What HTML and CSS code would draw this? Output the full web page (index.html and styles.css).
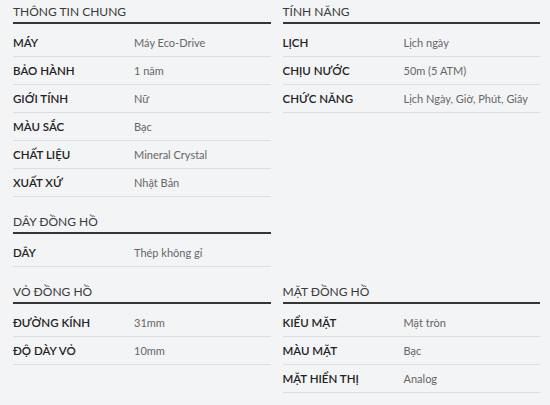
FILE: index.html
```html
<!DOCTYPE html>
<html lang="vi">
<head>
<meta charset="utf-8">
<link rel="stylesheet" href="styles.css">
</head>
<body>
<div class="specs">
  <section class="group">
    <h3 class="group-title">THÔNG TIN CHUNG</h3>
    <ul class="rows">
      <li class="row"><span class="label">MÁY</span><span class="value">Máy Eco-Drive</span></li>
      <li class="row"><span class="label">BẢO HÀNH</span><span class="value">1 năm</span></li>
      <li class="row"><span class="label">GIỚI TÍNH</span><span class="value">Nữ</span></li>
      <li class="row"><span class="label">MÀU SẮC</span><span class="value">Bạc</span></li>
      <li class="row"><span class="label">CHẤT LIỆU</span><span class="value">Mineral Crystal</span></li>
      <li class="row"><span class="label">XUẤT XỨ</span><span class="value">Nhật Bản</span></li>
    </ul>
  </section>
  <section class="group">
    <h3 class="group-title">TÍNH NĂNG</h3>
    <ul class="rows">
      <li class="row"><span class="label">LỊCH</span><span class="value">Lịch ngày</span></li>
      <li class="row"><span class="label">CHỊU NƯỚC</span><span class="value">50m (5 ATM)</span></li>
      <li class="row"><span class="label">CHỨC NĂNG</span><span class="value">Lịch Ngày, Giờ, Phút, Giây</span></li>
    </ul>
  </section>
  <section class="group">
    <h3 class="group-title">DÂY ĐỒNG HỒ</h3>
    <ul class="rows">
      <li class="row"><span class="label">DÂY</span><span class="value">Thép không gỉ</span></li>
    </ul>
  </section>
  <div class="group empty"></div>
  <section class="group">
    <h3 class="group-title">VỎ ĐỒNG HỒ</h3>
    <ul class="rows">
      <li class="row"><span class="label">ĐƯỜNG KÍNH</span><span class="value">31mm</span></li>
      <li class="row"><span class="label">ĐỘ DÀY VỎ</span><span class="value">10mm</span></li>
    </ul>
  </section>
  <section class="group">
    <h3 class="group-title">MẶT ĐỒNG HỒ</h3>
    <ul class="rows">
      <li class="row"><span class="label">KIỂU MẶT</span><span class="value">Mặt tròn</span></li>
      <li class="row"><span class="label">MÀU MẶT</span><span class="value">Bạc</span></li>
      <li class="row"><span class="label">MẶT HIỂN THỊ</span><span class="value">Analog</span></li>
    </ul>
  </section>
</div>
</body>
</html>
```

FILE: styles.css
```css
* { box-sizing: border-box; }
html, body {
  margin: 0;
  padding: 0;
  background: #f3f4f6;
  font-family: Lato, "Noto Sans", sans-serif;
}
.specs {
  display: grid;
  grid-template-columns: 1fr 1fr;
  column-gap: 12px;
  row-gap: 13px;
  padding: 0 10px 0 13px;
  align-items: start;
}
.group-title {
  margin: 0;
  padding: 4px 0 2px;
  font-size: 12px;
  line-height: 16px;
  font-weight: 400;
  color: #3a3a3a;
  border-bottom: 2px solid #353535;
}
.rows {
  list-style: none;
  margin: 5px 0 0;
  padding: 0;
}
.row {
  display: flex;
  align-items: center;
  height: 28px;
  border-bottom: 1px solid #dcdde0;
}
.label {
  width: 121px;
  flex: none;
  font-size: 11.5px;
  font-weight: 600;
  color: #222;
}
.value {
  font-size: 11px;
  color: #666;
}
```
